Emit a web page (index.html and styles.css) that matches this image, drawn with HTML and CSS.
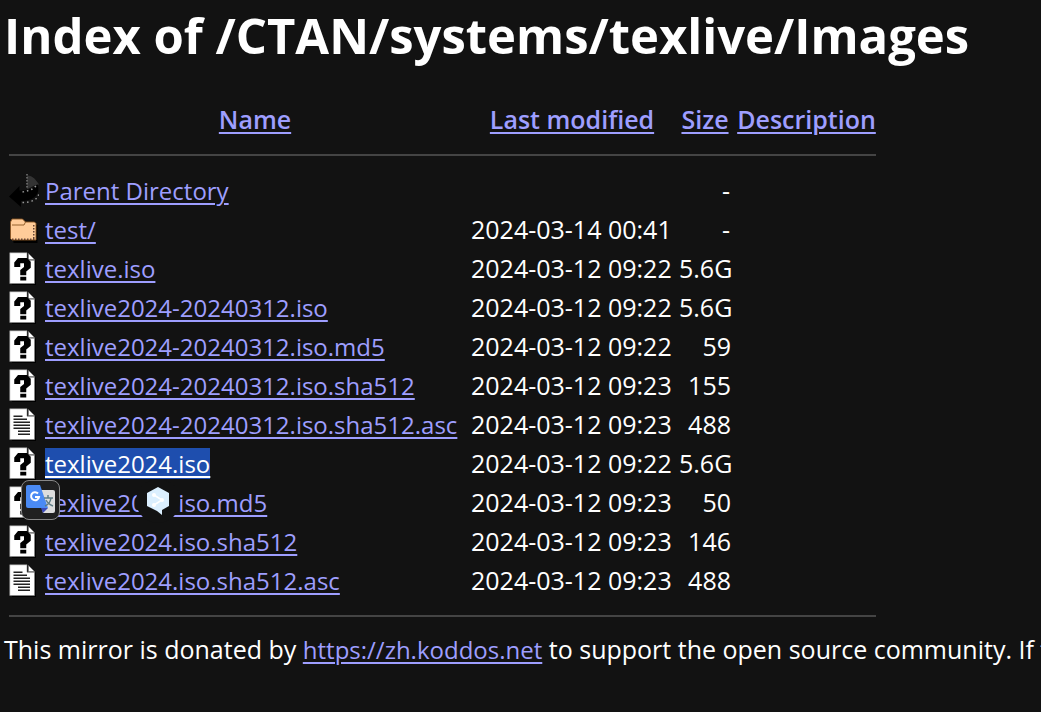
FILE: index.html
```
<!DOCTYPE html>
<html lang="en">
<head>
<meta charset="utf-8">
<title>Index of /CTAN/systems/texlive/Images</title>
<link rel="stylesheet" href="styles.css">
</head>
<body>
<svg class="defs" aria-hidden="true">
  <symbol id="back" viewBox="0 0 20 22">
    <path d="M12 1C16 1 18 4 20 7 17 7 15 9 12 10z" fill="#333"/>
    <path d="M12 0v9" stroke="#777" stroke-dasharray="1 1" fill="none"/>
    <path d="M0 15 7 8v3c5 0 9-1 12-4 2 5-1 11-11 11v4z" fill="#000"/>
    <path d="M9 12c4-1 6-1 9-4M9 19c6 0 11-2 11-7" stroke="#999" stroke-dasharray="1 2" fill="none"/>
  </symbol>
  <symbol id="folder" viewBox="0 0 20 22">
    <path d="M2 8h17v12H3z" fill="#000"/>
    <path d="M1 6 2 4h7l2 2h6l1 1v11H2l-1-1z" fill="#fc9" stroke="#852" stroke-width=".6"/>
    <path d="M2 8h8l1-2" fill="none" stroke="#852" stroke-width=".6"/>
    <path d="M2 17.500h15M16.500 8v9" fill="none" stroke="#643" stroke-dasharray="1 1"/>
  </symbol>
  <symbol id="unknown" viewBox="0 0 20 22">
    <path d="M1 1h12l5 5v16H2z" fill="#000"/>
    <path d="M.5 .5H12v5h5v15.500H.5zM13 1l4 4h-4z" fill="#fff" stroke="#888" stroke-width=".4"/>
    <path d="M3.500 7 6 4h6l2.500 2.500v4L11.500 13v2.500h-4V12L10 10V7.500H7.500V10h-4z" fill="#000"/>
    <path d="M7.500 16.500h4V19h-4z" fill="#000"/>
  </symbol>
  <symbol id="text" viewBox="0 0 20 22">
    <path d="M1 1h12l5 5v16H2z" fill="#000"/>
    <path d="M.5 .5H12v5h5v15.500H.5zM13 1l4 4h-4z" fill="#fff" stroke="#888" stroke-width=".4"/>
    <path d="M3 5.500h6M3 7.500h9M3 9.500h11M3 11.500h11M3 13.500h11M6 15.500h8M6 17.500h8" stroke="#222" fill="none"/>
  </symbol>
</svg>
<h1>Index of /CTAN/systems/texlive/Images</h1>
<table class="listing">
  <colgroup><col class="c-icon"><col class="c-name"><col class="c-date"><col class="c-size"><col class="c-desc"></colgroup>
  <thead>
    <tr><th></th><th><a href="#">Name</a></th><th><a href="#">Last modified</a></th><th><a href="#">Size</a></th><th><a href="#">Description</a></th></tr>
    <tr class="rule"><th colspan="5"><hr></th></tr>
  </thead>
  <tbody>
    <tr><td><svg class="icon"><use href="#back"/></svg></td><td><a href="#">Parent Directory</a></td><td></td><td class="size dash">-</td><td></td></tr>
    <tr><td><svg class="icon"><use href="#folder"/></svg></td><td><a href="#">test/</a></td><td>2024-03-14 00:41</td><td class="size dash">-</td><td></td></tr>
    <tr><td><svg class="icon"><use href="#unknown"/></svg></td><td><a href="#">texlive.iso</a></td><td>2024-03-12 09:22</td><td class="size">5.6G</td><td></td></tr>
    <tr><td><svg class="icon"><use href="#unknown"/></svg></td><td><a href="#">texlive2024-20240312.iso</a></td><td>2024-03-12 09:22</td><td class="size">5.6G</td><td></td></tr>
    <tr><td><svg class="icon"><use href="#unknown"/></svg></td><td><a href="#">texlive2024-20240312.iso.md5</a></td><td>2024-03-12 09:22</td><td class="size">59</td><td></td></tr>
    <tr><td><svg class="icon"><use href="#unknown"/></svg></td><td><a href="#">texlive2024-20240312.iso.sha512</a></td><td>2024-03-12 09:23</td><td class="size">155</td><td></td></tr>
    <tr><td><svg class="icon"><use href="#text"/></svg></td><td><a href="#">texlive2024-20240312.iso.sha512.asc</a></td><td>2024-03-12 09:23</td><td class="size">488</td><td></td></tr>
    <tr><td><svg class="icon"><use href="#unknown"/></svg></td><td><a class="selected" href="#">texlive2024.iso</a></td><td>2024-03-12 09:22</td><td class="size">5.6G</td><td></td></tr>
    <tr><td><svg class="icon"><use href="#unknown"/></svg></td><td class="anchor"><a href="#">texlive2024.iso.md5</a>
      <button class="translate" aria-label="Google Translate"><svg viewBox="0 0 30 30">
        <path d="M12 5h15q2 0 2 2v19q0 2-2 2H17z" fill="#ddd"/>
        <path d="m15 23 7 0-5 5z" fill="#3c4bb8"/>
        <path d="M2 0h12l8 23H2q-2 0-2-2V2Q0 0 2 0z" fill="#4a8af4"/>
        <path d="M12 8.500A4 4 0 1 0 13 12H9" fill="none" stroke="#fff" stroke-width="2"/>
        <path d="M18 13h9M22 10v3M25 13q-1 6-6 8M20 15q2 4 7 6" fill="none" stroke="#607d86" stroke-width="1.500"/>
      </svg></button>
      <button class="deepl" aria-label="DeepL"><svg viewBox="0 0 24 30">
        <path d="M12 1 23 7v13l-7 4v5l-5-4L1 20V7z" fill="#dbeffe"/>
        <path d="m8 9 8 5-8 5" fill="none" stroke="#fff" stroke-width="1.500"/>
        <circle cx="8" cy="9" r="2" fill="#fff"/><circle cx="16" cy="14" r="2" fill="#fff"/><circle cx="8" cy="19" r="2" fill="#fff"/>
      </svg></button></td><td>2024-03-12 09:23</td><td class="size">50</td><td></td></tr>
    <tr><td><svg class="icon"><use href="#unknown"/></svg></td><td><a href="#">texlive2024.iso.sha512</a></td><td>2024-03-12 09:23</td><td class="size">146</td><td></td></tr>
    <tr><td><svg class="icon"><use href="#text"/></svg></td><td><a href="#">texlive2024.iso.sha512.asc</a></td><td>2024-03-12 09:23</td><td class="size">488</td><td></td></tr>
    <tr class="rule"><td colspan="5"><hr></td></tr>
  </tbody>
</table>
<p class="note">This mirror is donated by <a href="#">https://zh.koddos.net</a> to support the open source community. If t</p>
</body>
</html>
```
FILE: styles.css
```
body {
  margin: 0;
  padding: 2px 0 0 4px;
  background: #121212;
  color: #fff;
  font: 25px/35px "Open Sans", "Noto Sans", sans-serif;
  overflow: hidden;
  white-space: nowrap;
}
.defs { position: absolute; width: 0; height: 0; }
h1 { margin: 0 0 30px; font-size: 49px; line-height: 66px; font-weight: 700; }
a { color: #9e9eff; text-decoration-thickness: 2px; text-underline-offset: 3px; }
td a, .note a { font-size: 24px; }
.listing { table-layout: fixed; width: 877px; border-spacing: 4px; }
.listing th, .listing td { padding: 0 1px; height: 35px; text-align: left; }
.listing th { text-align: center; font-weight: 600; }
.listing .rule > * { height: 27px; line-height: 2px; }
.listing thead .rule > * { height: 28px; }
.c-icon { width: 32px; }
.c-name { width: 422px; }
.c-date { width: 204px; }
.c-size { width: 54px; }
hr { margin: 0; border: 0; height: 2px; background: #444; }
.icon { display: block; width: 30px; height: 33px; }
.listing .size { text-align: right; }
.listing .dash { padding-right: 2px; }
.selected { display: inline-block; line-height: 31px; background: #1e4eae; color: #fff; }
.anchor { position: relative; }
.translate, .deepl { position: absolute; padding: 0; display: grid; place-items: center; }
.translate { left: -23px; top: -5px; width: 39px; height: 40px; background: #202020; border: 1px solid #888; border-radius: 8px; }
.translate svg { width: 30px; height: 30px; }
.deepl { left: 92px; top: -6px; width: 44px; height: 44px; background: #121212; border: 0; border-radius: 50%; }
.deepl svg { width: 24px; height: 30px; }
.note { margin: 0; line-height: 32px; }
```
